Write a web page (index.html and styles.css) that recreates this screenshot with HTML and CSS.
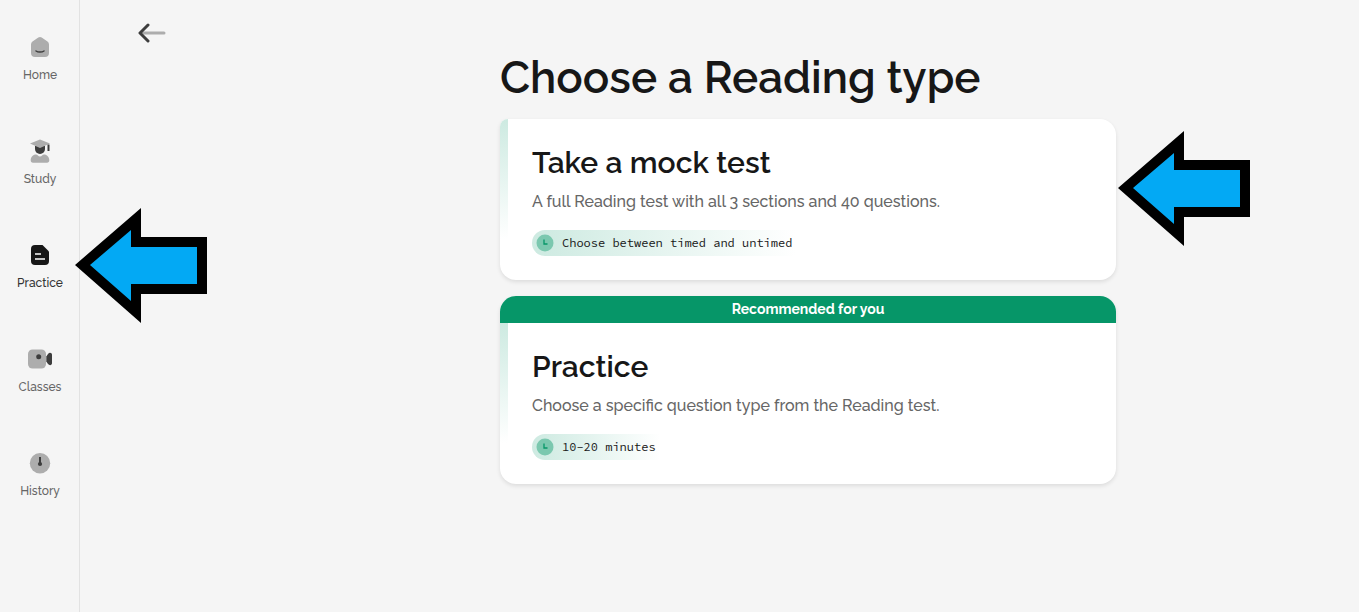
FILE: index.html
```html
<!DOCTYPE html>
<html lang="en">

<head>
    <meta charset="utf-8" />
    <meta name="viewport" content="width=device-width, initial-scale=1" />
    <title>Choose a Reading type</title>
    <link rel="stylesheet" href="styles.css">
</head>

<body>
    <nav class="sidebar">
        <a class="nav-item" href="#home">
            <svg width="24" height="24" viewBox="0 0 24 24" fill="none">
                <path d="M10.3 2.6a3 3 0 0 1 3.400 0l5.800 4a3.400 3.400 0 0 1 1.500 2.800V18a4 4 0 0 1-4 4H7a4 4 0 0 1-4-4V9.400a3.400 3.400 0 0 1 1.500-2.800z" fill="#adadad" />
                <path d="M8 16c2 1.400 6 1.400 8 0" stroke="#3d3d3d" stroke-width="1.5" stroke-linecap="round" />
            </svg>
            <span>Home</span>
        </a>
        <a class="nav-item" href="#study">
            <svg width="24" height="24" viewBox="0 0 24 24" fill="none">
                <path d="M7 7h10v3a5 5 0 0 1-10 0z" fill="#3d3d3d" />
                <path d="M12 .6 22 4.600 12 9 2 4.600z" fill="#adadad" />
                <path d="M20.500 5.500v6.500" stroke="#3d3d3d" stroke-width="2" />
                <path d="M8 15.500c1.600 0 2.300 2 4 2s2.400-2 4-2c3 0 5.300 2.600 5.300 5.700 0 1.500-.8 2.500-2.300 2.500H5c-1.500 0-2.300-1-2.300-2.500 0-3.100 2.300-5.700 5.300-5.700z" fill="#adadad" />
            </svg>
            <span>Study</span>
        </a>
        <a class="nav-item active" href="#practice">
            <svg width="24" height="24" viewBox="0 0 24 24" fill="none">
                <path d="M7 2h7.500L21 8.500V18a4 4 0 0 1-4 4H7a4 4 0 0 1-4-4V6a4 4 0 0 1 4-4z" fill="#171717" />
                <path d="M7 11h6M7 16h10" stroke="#fff" stroke-width="1.6" />
            </svg>
            <span>Practice</span>
            <svg class="pointer pointer-nav" width="132" height="115" viewBox="0 0 132 115" aria-hidden="true">
                <path d="M0 57 66 0v29h66v57H66v29z" fill="#000" />
                <path d="M15 57 56 22v17h66v37H56v17z" fill="#03a9f4" />
            </svg>
        </a>
        <a class="nav-item" href="#classes">
            <svg width="24" height="24" viewBox="0 0 24 24" fill="none">
                <rect x="0" y="2.500" width="18" height="19" rx="4.500" fill="#adadad" />
                <circle cx="10.700" cy="9.700" r="2.500" fill="#3d3d3d" />
                <path d="M18.300 9.500 20 7c1.400-1.900 4-1.400 4 1v8c0 2.400-2.600 2.900-4 1l-1.700-2.500z" fill="#3d3d3d" />
            </svg>
            <span>Classes</span>
        </a>
        <a class="nav-item" href="#history">
            <svg width="24" height="24" viewBox="0 0 24 24" fill="none">
                <circle cx="12" cy="12.300" r="10.200" fill="#adadad" />
                <path d="M12 6v7" stroke="#3d3d3d" stroke-width="2" />
                <circle cx="12" cy="13" r="2.100" fill="#3d3d3d" />
            </svg>
            <span>History</span>
        </a>
    </nav>

    <main class="main">
        <div class="back">
            <button class="back-button" type="button" aria-label="Back">
                <svg width="28" height="20" viewBox="0 0 28 20" fill="none" stroke-width="3" stroke-linecap="round" stroke-linejoin="round">
                    <path d="M5 10h21" stroke="#adadad" />
                    <path d="M10 2 2 10l8 8" stroke="#3d3d3d" />
                </svg>
            </button>
        </div>

        <div class="content">
            <h1 class="title">Choose a Reading type</h1>

            <a class="card card-mock" href="#mock-test">
                <div class="card-body">
                    <h2 class="card-title">Take a mock test</h2>
                    <p class="card-text">A full Reading test with all 3 sections and 40 questions.</p>
                    <span class="chip">
                        <svg width="18" height="18" viewBox="0 0 18 18" fill="none">
                            <circle cx="9" cy="9" r="8.500" fill="#7bc8af" />
                            <path d="M8 5.500v4.500h3.500" stroke="#069668" stroke-width="1.3" />
                        </svg>
                        Choose between timed and untimed
                    </span>
                </div>
                <svg class="pointer pointer-card" width="132" height="115" viewBox="0 0 132 115" aria-hidden="true">
                    <path d="M0 57 66 0v29h66v57H66v29z" fill="#000" />
                    <path d="M15 57 56 22v17h66v37H56v17z" fill="#03a9f4" />
                </svg>
            </a>

            <a class="card card-practice" href="#practice-type">
                <div class="banner">Recommended for you</div>
                <div class="card-body">
                    <h2 class="card-title">Practice</h2>
                    <p class="card-text">Choose a specific question type from the Reading test.</p>
                    <span class="chip">
                        <svg width="18" height="18" viewBox="0 0 18 18" fill="none">
                            <circle cx="9" cy="9" r="8.500" fill="#7bc8af" />
                            <path d="M8 5.500v4.500h3.500" stroke="#069668" stroke-width="1.3" />
                        </svg>
                        10-20 minutes
                    </span>
                </div>
            </a>
        </div>
    </main>
</body>

</html>
```
FILE: styles.css
```css
* {
    box-sizing: border-box;
}

body {
    margin: 0;
    min-height: 100vh;
    display: flex;
    background-color: #f5f5f5;
    color: #171717;
    font-family: Raleway, Lato, sans-serif;
}

a {
    color: inherit;
    text-decoration: none;
}

.sidebar {
    flex: none;
    width: 80px;
    padding-top: 35px;
    display: flex;
    flex-direction: column;
    gap: 56px;
    box-shadow: inset -1px 0 #e2e2e2;
}

.nav-item {
    position: relative;
    display: flex;
    flex-direction: column;
    align-items: center;
    gap: 8px;
    color: #666;
    font-size: 12px;
    font-weight: 500;
    line-height: 16px;
}

.nav-item.active {
    color: #333;
}

.main {
    flex: 1;
    display: grid;
    grid-template-columns: 177px 1fr;
}

.back {
    padding: 23px 0 0 58px;
}

.back-button {
    display: block;
    padding: 0;
    border: 0;
    background: none;
    cursor: pointer;
}

.back-button svg {
    display: block;
}

.content {
    width: 100%;
    max-width: 616px;
    margin: 0 auto;
    padding-top: 50px;
}

.title {
    margin: 0 0 13px;
    font-size: 44px;
    font-weight: 600;
    line-height: 56px;
}

.card {
    position: relative;
    display: block;
    margin-bottom: 16px;
    background-color: #fff;
    border-radius: 16px;
    box-shadow: 0 2px 4px rgba(0, 0, 0, 0.1);
}

.card-mock {
    border-top-left-radius: 8px;
}

.card-practice {
    overflow: hidden;
}

.banner {
    background-color: #069668;
    color: #fff;
    font-size: 14px;
    font-weight: 700;
    line-height: 27px;
    text-align: center;
}

.card-body {
    position: relative;
    padding: 24px 32px;
}

/* green strip fading down the left edge */
.card-body::before {
    content: "";
    position: absolute;
    left: 0;
    top: 0;
    width: 8px;
    height: 120px;
    background: linear-gradient(#cdeae1, #fff);
}

.card-mock .card-body::before {
    border-top-left-radius: 8px;
}

.card-title {
    margin: 0 0 6px;
    font-size: 30px;
    font-weight: 600;
    line-height: 40px;
}

.card-text {
    margin: 0 0 16px;
    color: #666;
    font-size: 16px;
    font-weight: 500;
    line-height: 25px;
}

.chip {
    width: fit-content;
    display: flex;
    align-items: center;
    gap: 8px;
    padding: 0 4px;
    border-radius: 13px 0 0 13px;
    background: linear-gradient(90deg, #cdeae1, #fff);
    font-family: "Source Code Pro", "Fira Mono", "DejaVu Sans Mono", monospace;
    font-size: 12px;
    line-height: 26px;
}

.pointer {
    position: absolute;
    z-index: 1;
}

.pointer-nav {
    left: 75px;
    top: -35px;
}

.pointer-card {
    left: calc(100% + 2px);
    top: 12px;
}
```
